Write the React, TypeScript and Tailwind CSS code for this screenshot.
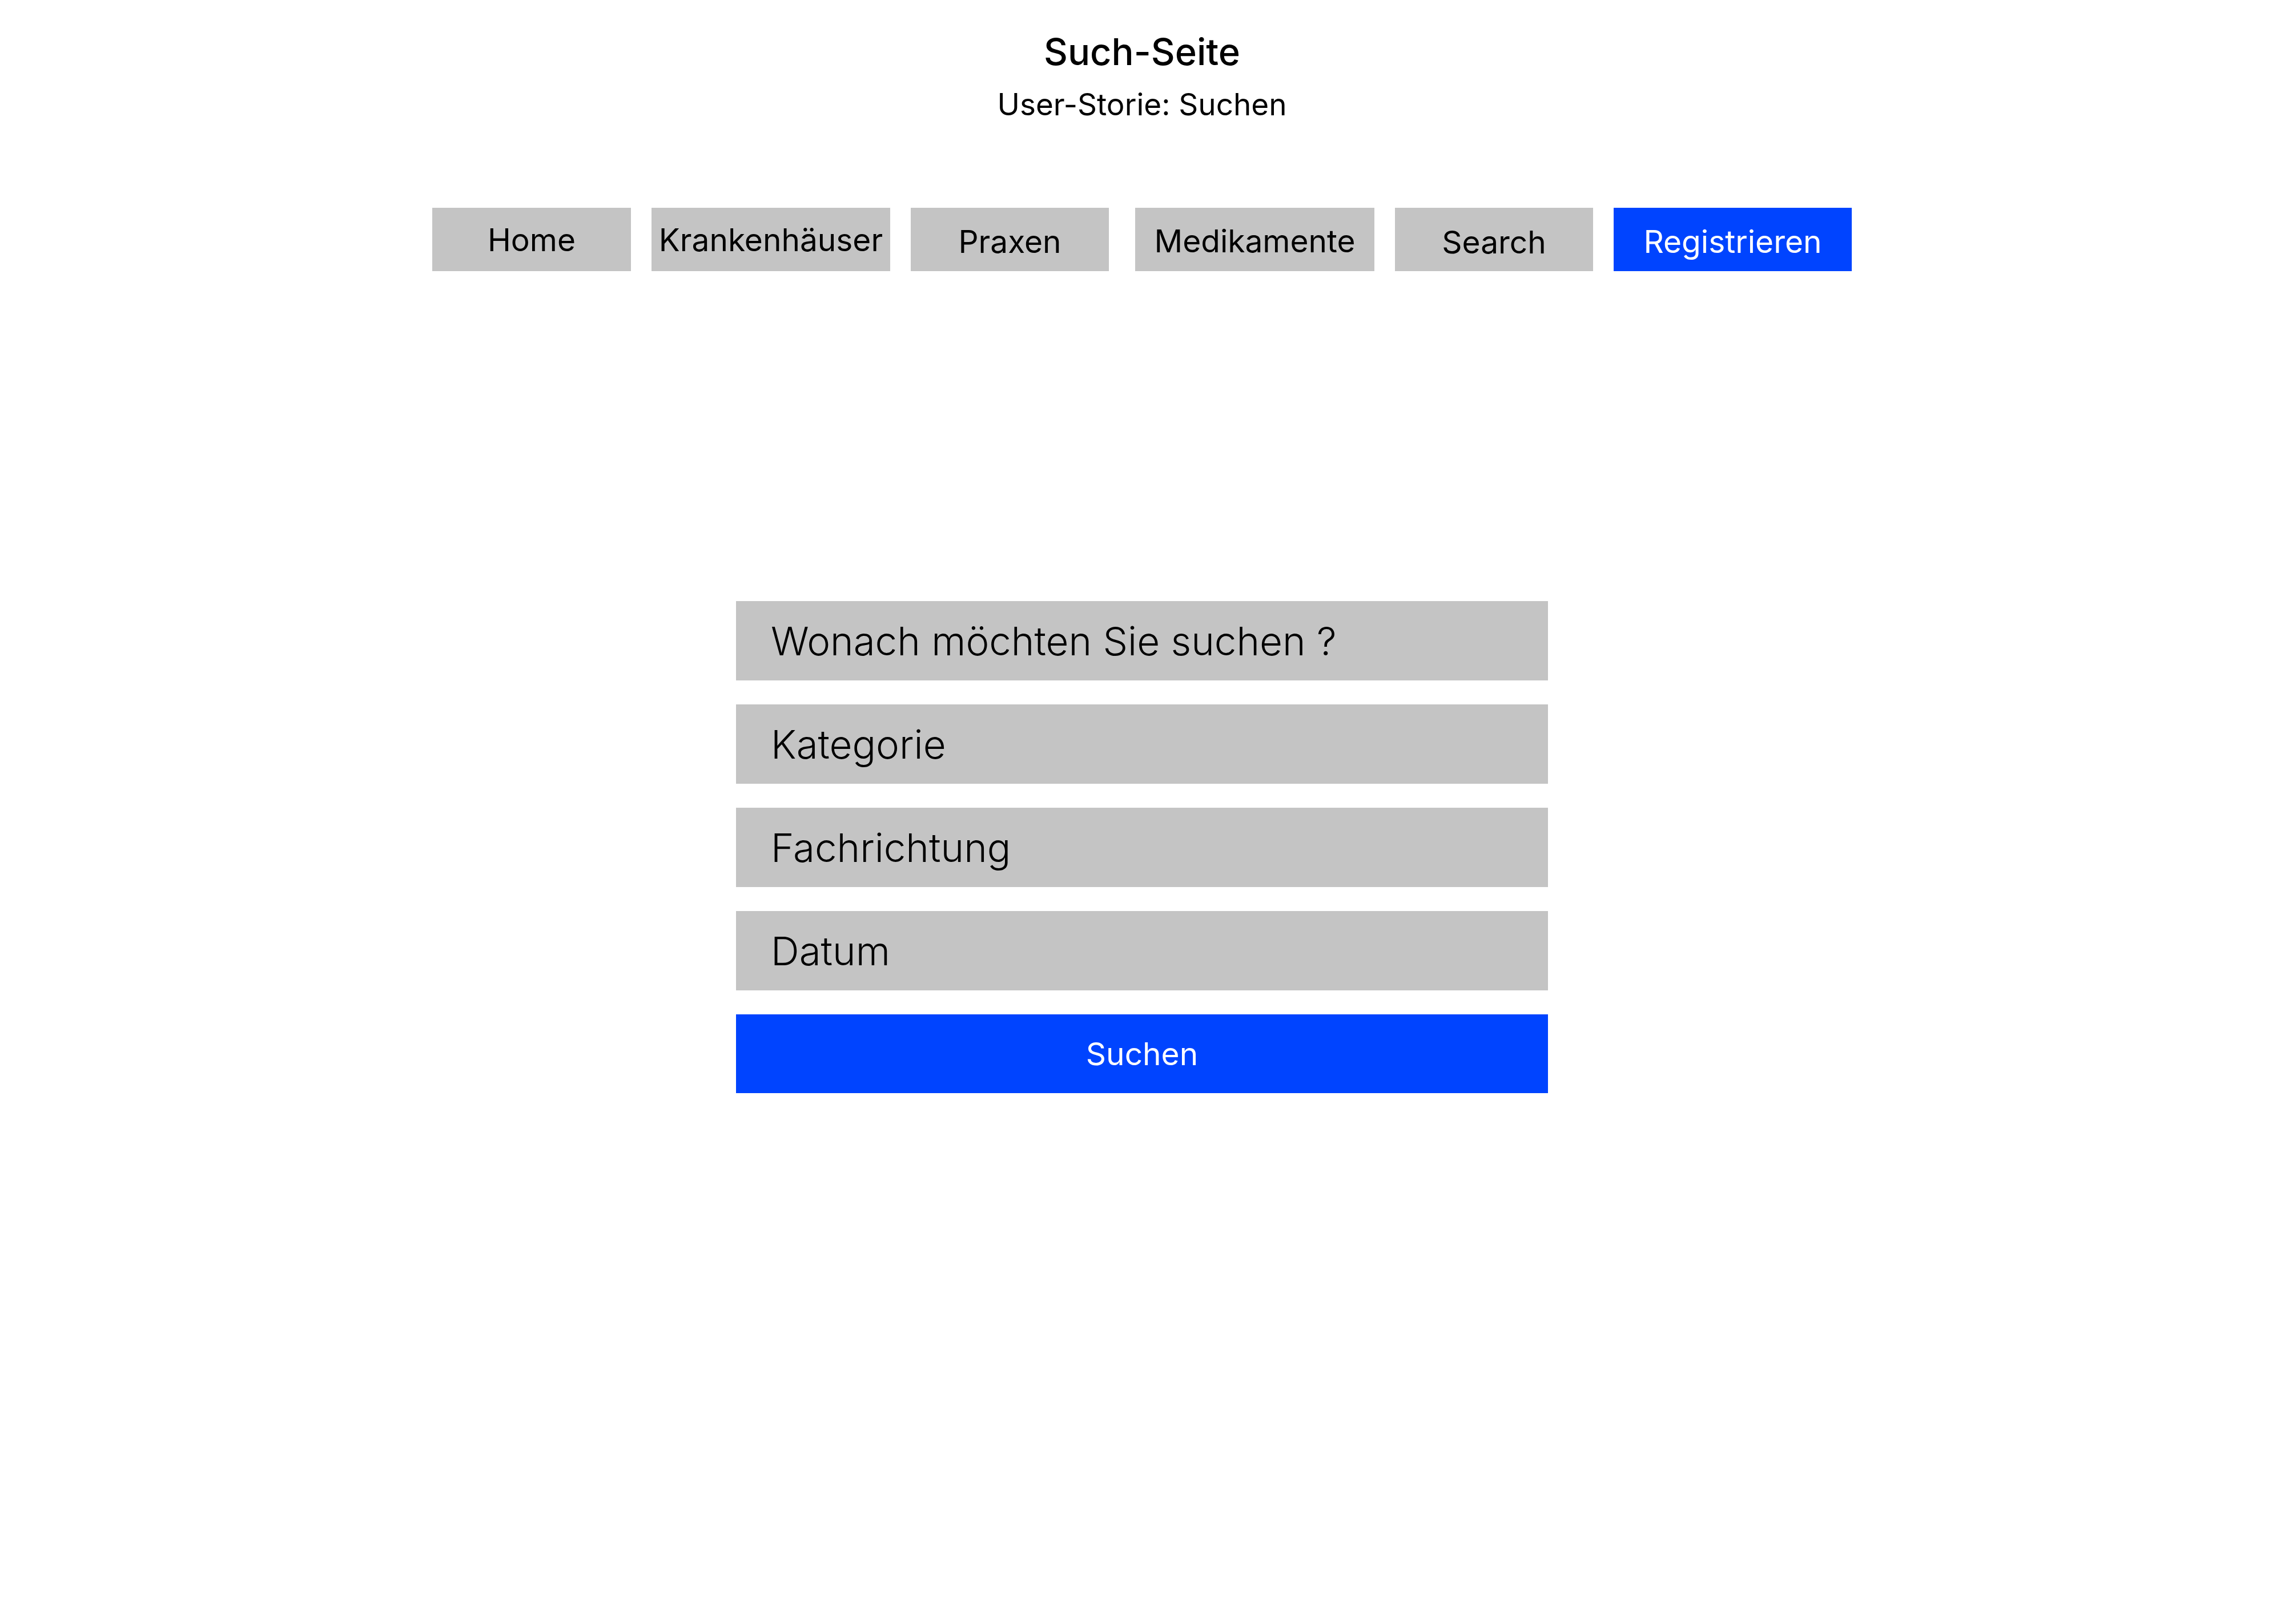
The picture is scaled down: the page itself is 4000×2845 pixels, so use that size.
import React from "react";

const NAV = [
  { label: "Home", width: "w-[348px]", extra: "pt-0" },
  { label: "Krankenhäuser", width: "w-[418px]", extra: "pt-0" },
  { label: "Praxen", width: "w-[347px]", extra: "pt-[6px]" },
  { label: "Medikamente", width: "w-[419px] ml-[10px]", extra: "pt-[4px]" },
  { label: "Search", width: "w-[347px]", extra: "pt-[8px]" },
];

const FIELDS = ["Wonach möchten Sie suchen ?", "Kategorie", "Fachrichtung", "Datum"];

const App = () => {
  return (
    <div className="min-h-[2845px] bg-white font-['Inter',sans-serif] text-black">
      <header className="flex flex-col items-center pt-[51px]">
        <h1 className="text-[65px] leading-[79px] font-medium">Such-Seite</h1>
        <p className="mt-[21px] text-[53px] leading-[65px]">User-Storie: Suchen</p>
      </header>

      <nav className="mt-[148px] flex justify-center gap-[36px]">
        {NAV.map((item) => (
          <a
            key={item.label}
            href="#"
            className={`flex h-[111px] items-center justify-center bg-[#c4c4c4] text-[55px] leading-[68px] ${item.width} ${item.extra}`}
          >
            {item.label}
          </a>
        ))}
        <a
          href="#"
          className="flex h-[111px] w-[417px] items-center justify-center bg-[#0044ff] pt-[6px] text-[55px] leading-[68px] text-white"
        >
          Registrieren
        </a>
      </nav>

      <form className="mx-auto mt-[578px] flex w-[1422px] flex-col gap-[42px]">
        {FIELDS.map((field) => (
          <div
            key={field}
            className="flex h-[139px] items-center bg-[#c4c4c4] pl-[61px] text-[69px] leading-[84px] font-light"
          >
            {field}
          </div>
        ))}
        <button
          type="button"
          className="flex h-[138px] items-center justify-center bg-[#0044ff] text-[55px] leading-[66px] text-white"
        >
          Suchen
        </button>
      </form>
    </div>
  );
};

export default App;
